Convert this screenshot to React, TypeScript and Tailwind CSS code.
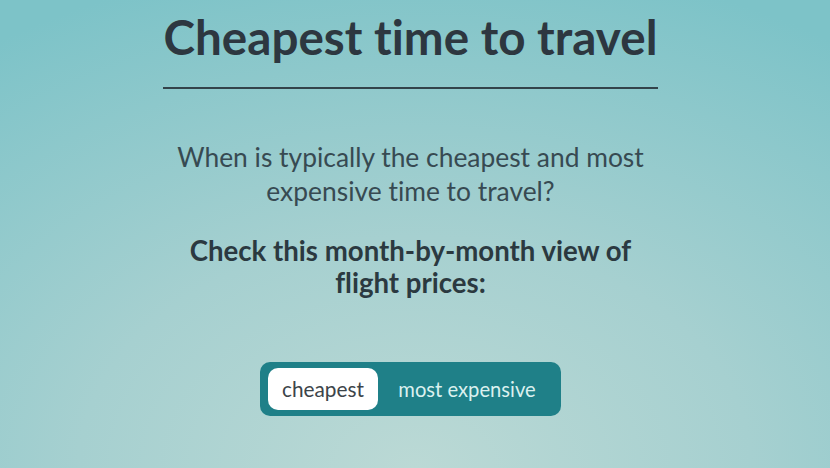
import React from "react";

export default function App() {
  return (
    <div className="w-full h-[468px] overflow-hidden bg-[radial-gradient(ellipse_90%_110%_at_50%_100%,#bbd9d5_0%,#a6d0d0_45%,#7dc3c8_100%)] font-['Lato',sans-serif] [font-variant-ligatures:none]">
      <div className="flex flex-col items-center pr-[9px]">
        <h1 className="pt-[8px] text-[47.6px] leading-[57px] font-bold text-[#2d3740] whitespace-nowrap">
          Cheapest time to travel
        </h1>
        <div className="mt-[22px] w-[495px] h-[2px] bg-[#33434a]" />
        <p className="mt-[51px] text-center text-[26.4px] leading-[34px] text-[#374a52] w-[480px]">
          When is typically the cheapest and most expensive time to travel?
        </p>
        <p className="mt-[27px] text-center text-[27.6px] leading-[32px] font-bold text-[#2b3940] w-[460px]">
          Check this month-by-month view of flight prices:
        </p>
        <div className="mt-[63px] flex items-center w-[301px] h-[54px] pl-[8px] pr-[5px] rounded-[10px] bg-[#1f8088]">
          <button className="w-[110px] h-[42px] rounded-[10px] bg-white text-[20.8px] text-[#3c4449] flex items-center justify-center">
            cheapest
          </button>
          <button className="flex-1 h-[42px] text-[20.2px] text-[#dbf1ef] flex items-center justify-center">
            most expensive
          </button>
        </div>
      </div>
    </div>
  );
}
